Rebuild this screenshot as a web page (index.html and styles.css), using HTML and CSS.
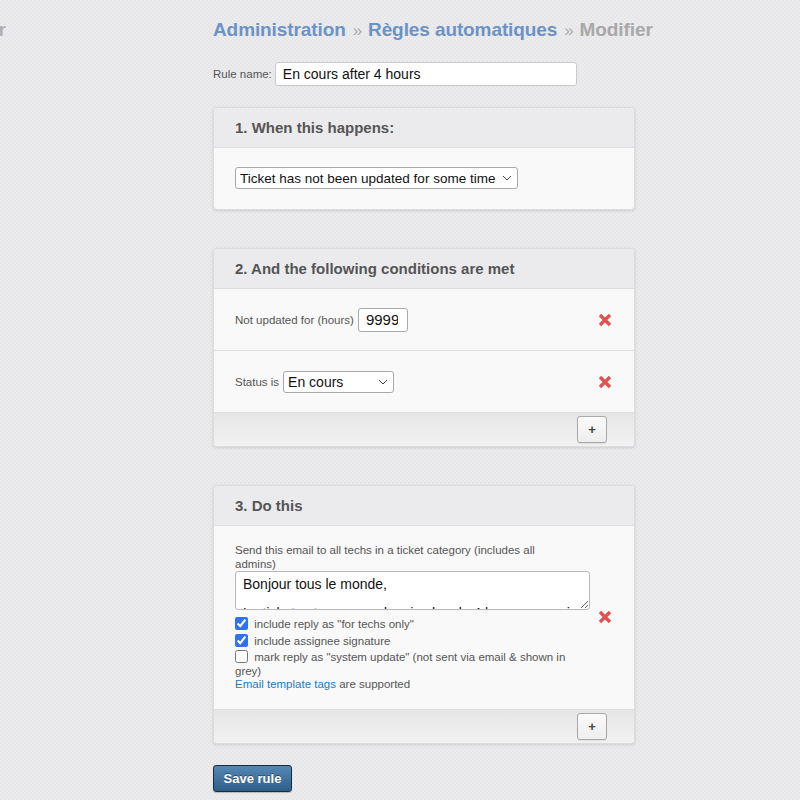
FILE: index.html
```html
<!DOCTYPE html>
<html>
<head>
<meta charset="utf-8">
<link rel="stylesheet" href="styles.css">
</head>
<body>
<div class="page">
  <div class="side"><span class="side-text">Modifier</span></div>
  <main class="main">
    <h1 class="crumbs"><a class="crumb">Administration</a><span class="sep">»</span><a class="crumb">Règles automatiques</a><span class="sep">»</span><span class="current">Modifier</span></h1>

    <div class="name-row">
      <label class="name-label">Rule name:</label>
      <input class="name-input" type="text" value="En cours after 4 hours">
    </div>

    <section class="panel">
      <header class="panel-head">1. When this happens:</header>
      <div class="panel-body pad">
        <select class="sel sel-event"><option>Ticket has not been updated for some time</option></select>
      </div>
    </section>

    <section class="panel">
      <header class="panel-head">2. And the following conditions are met</header>
      <div class="row">
        <div class="row-main"><span class="lbl">Not updated for (hours)</span><input class="num" type="text" value="9999"></div>
        <svg class="del" width="14" height="14" viewBox="0 0 14 14"><path d="M2 2L12 12M12 2L2 12" stroke="#e05252" stroke-width="3.4"/></svg>
      </div>
      <div class="row">
        <div class="row-main"><span class="lbl">Status is</span><select class="sel sel-status"><option>En cours</option></select></div>
        <svg class="del" width="14" height="14" viewBox="0 0 14 14"><path d="M2 2L12 12M12 2L2 12" stroke="#e05252" stroke-width="3.4"/></svg>
      </div>
      <footer class="panel-foot"><button class="add">+</button></footer>
    </section>

    <section class="panel">
      <header class="panel-head">3. Do this</header>
      <div class="row action">
        <div class="action-main">
          <div class="desc">Send this email to all techs in a ticket category (includes all admins)</div>
          <textarea class="msg">Bonjour tous le monde,

Le ticket est en cours depuis plus de 4 heures, merci de le traiter.</textarea>
          <label class="chk"><input type="checkbox" checked> include reply as "for techs only"</label>
          <label class="chk"><input type="checkbox" checked> include assignee signature</label>
          <label class="chk chk-last"><input type="checkbox"> mark reply as "system update" (not sent via email &amp; shown in grey)</label>
          <div class="tags"><a class="link">Email template tags</a> are supported</div>
        </div>
        <svg class="del" width="14" height="14" viewBox="0 0 14 14"><path d="M2 2L12 12M12 2L2 12" stroke="#e05252" stroke-width="3.4"/></svg>
      </div>
      <footer class="panel-foot"><button class="add">+</button></footer>
    </section>

    <button class="save">Save rule</button>
  </main>
</div>
</body>
</html>
```
FILE: styles.css
```css
html, body {
  margin: 0;
  padding: 0;
}
body {
  background-color: #e9e8eb;
  background-image: repeating-conic-gradient(#e6e5e8 0 25%, #ecebee 0 50%);
  background-size: 4px 4px;
  font-family: "Liberation Sans", Arial, sans-serif;
  color: #555;
  min-height: 800px;
}
.page {
  display: flex;
}
.side {
  width: 6px;
  overflow: hidden;
  display: flex;
  justify-content: flex-end;
  padding-top: 19px;
}
.side-text {
  font-size: 19px;
  font-weight: bold;
  color: #b0b0b0;
  line-height: 22px;
  white-space: nowrap;
}
.main {
  margin-left: 207px;
  width: 422px;
  padding-bottom: 8px;
}
.crumbs {
  margin: 19px 0 0;
  font-size: 19px;
  line-height: 22px;
  font-weight: bold;
  white-space: nowrap;
  letter-spacing: -0.1px;
}
.crumb {
  color: #6b93c6;
}
.sep {
  color: #ababab;
  font-weight: normal;
  margin: 0 6px 0 7px;
  font-size: 17px;
}
.current {
  color: #a8a8a8;
}
.name-row {
  display: flex;
  align-items: center;
  gap: 3px;
  margin-top: 20px;
}
.name-label {
  font-size: 11.5px;
  color: #555;
}
.name-input {
  width: 302px;
  height: 24px;
  box-sizing: border-box;
  border: 1px solid #c9c9c9;
  border-radius: 3px;
  font-family: "Liberation Sans", Arial, sans-serif;
  font-size: 14px;
  padding: 0 7px;
  color: #111;
  background: #fff;
}
.panel {
  margin-top: 21px;
  background: #f9f9f9;
  border: 1px solid #dcdcdc;
  border-radius: 4px;
  box-shadow: 0 1px 3px rgba(0,0,0,0.12);
  overflow: hidden;
}
.panel + .panel {
  margin-top: 38px;
}
.panel-head {
  height: 39px;
  line-height: 39px;
  background: #ebebed;
  border-bottom: 1px solid #dedede;
  padding: 0 21px;
  font-size: 15px;
  font-weight: bold;
  color: #555;
}
.pad {
  padding: 19px 21px 20px;
}
.sel {
  appearance: none;
  -webkit-appearance: none;
  height: 22px;
  box-sizing: border-box;
  border: 1px solid #a9a9a9;
  border-radius: 3px;
  background-color: #fff;
  background-image: url("data:image/svg+xml;utf8,<svg xmlns='http://www.w3.org/2000/svg' width='10' height='6' viewBox='0 0 10 6'><path d='M1 1L5 5L9 1' fill='none' stroke='%23444' stroke-width='1'/></svg>");
  background-repeat: no-repeat;
  background-position: right 5px center;
  font-family: "Liberation Sans", Arial, sans-serif;
  color: #111;
  padding: 0 0 0 4px;
  display: block;
}
.sel-event {
  width: 283px;
  font-size: 13.5px;
}
.sel-status {
  width: 111px;
  font-size: 14px;
}
.row {
  display: flex;
  align-items: center;
  justify-content: space-between;
  padding: 0 22px 0 21px;
  height: 61px;
  border-bottom: 1px solid #dedede;
}
.row-main {
  display: flex;
  align-items: center;
  gap: 4px;
}
.lbl {
  font-size: 11.5px;
  color: #555;
}
.num {
  width: 50px;
  height: 24px;
  box-sizing: border-box;
  border: 1px solid #a9a9a9;
  border-radius: 3px;
  font-family: "Liberation Sans", Arial, sans-serif;
  font-size: 15px;
  padding: 0 9px 0 7px;
  color: #111;
  background: #fff;
}
.del {
  flex: none;
}
.panel-foot {
  height: 33px;
  background: linear-gradient(#e6e6e6, #f2f2f2);
  display: flex;
  align-items: center;
  justify-content: flex-end;
  padding-right: 27px;
}
.add {
  width: 30px;
  height: 27px;
  border: 1px solid #a8a8a8;
  border-radius: 3px;
  background: linear-gradient(#fafafa, #eeeeee);
  font-family: "Liberation Sans", Arial, sans-serif;
  font-weight: bold;
  font-size: 13px;
  color: #444;
  padding: 0;
  box-shadow: 0 1px 1px rgba(0,0,0,0.08);
}
.action {
  height: auto;
  padding-top: 17px;
  padding-bottom: 18px;
}
.action-main {
  width: 340px;
  font-size: 11.5px;
  line-height: 14px;
  color: #555;
}
.desc {
  width: 330px;
}
.msg {
  display: block;
  width: 355px;
  height: 39px;
  box-sizing: border-box;
  margin: 0 0 7px;
  border: 1px solid #b8b8b8;
  border-radius: 3px;
  background: #fff;
  font-family: "Liberation Sans", Arial, sans-serif;
  font-size: 14px;
  line-height: 14.5px;
  padding: 5px 7px 0;
  color: #111;
  overflow: hidden;
  resize: vertical;
}
.chk {
  display: block;
  line-height: 14px;
  margin-bottom: 2.5px;
}
.chk-last {
  margin-bottom: -1px;
}
.chk input {
  width: 13px;
  height: 13px;
  margin: 0 3px 0 0;
  vertical-align: -2px;
  accent-color: #2f74ee;
}
.link {
  color: #2b78b8;
}
.save {
  margin-top: 21px;
  width: 79px;
  height: 27px;
  border: 1px solid #1d2c3a;
  border-radius: 3px;
  background: linear-gradient(#5587b5, #2e5f8b);
  color: #fff;
  font-family: "Liberation Sans", Arial, sans-serif;
  font-weight: bold;
  font-size: 13px;
  text-shadow: 0 -1px 0 rgba(0,0,0,0.4);
  padding: 0;
  box-shadow: 0 1px 1px rgba(0,0,0,0.2);
}
```
